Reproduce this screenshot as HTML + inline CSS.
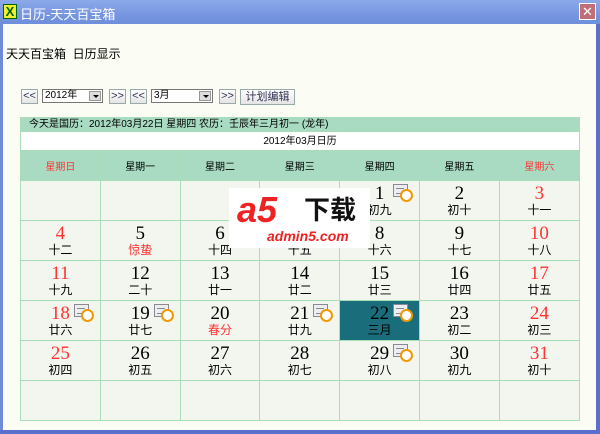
<!DOCTYPE html><html><head><meta charset="utf-8"><style>
*{margin:0;padding:0;box-sizing:border-box}
body{width:600px;height:434px;overflow:hidden;background:#fbfcf4;font-family:"Liberation Sans","Noto Sans CJK SC",sans-serif;font-size:12px;position:relative}
.tb{position:absolute;left:0;top:0;width:600px;height:24px;background:linear-gradient(#8ba9ea,#7796e0 60%,#6f8fdc);}
.tt{position:absolute;left:20px;top:4px;color:#fff;font-size:13px}
.lb{position:absolute;left:0;top:24px;width:3px;height:410px;background:#6f8ad8}
.rb{position:absolute;right:0;top:24px;width:4px;height:410px;background:#5b6fcf}
.bb{position:absolute;left:0;bottom:0;width:600px;height:4px;background:#5b6fcf}
.btn{position:absolute;top:92px;height:15px;border:1px solid #9aa;background:linear-gradient(#fff,#e4e4e4);font-size:11px;text-align:center;line-height:13px;color:#335}
.sel{position:absolute;top:89px;height:14px;border:1px solid #777;background:#fff;font-size:10px;line-height:12px;padding-left:2px}
.sel i{position:absolute;right:1px;top:1px;width:12px;height:10px;background:#ddd;border:1px solid #999}
.sel i:after{content:"";position:absolute;left:3px;top:3px;border:3px solid transparent;border-top:3px solid #000}
table{position:absolute;left:20px;top:117px;border-collapse:collapse;width:560px;table-layout:fixed}
td{border:1px solid #a9dcb9;width:80px;height:40px;background:#f2f6ee;text-align:center;vertical-align:top;position:relative}
.h td{height:30px;background:#a9dbc3;vertical-align:middle;font-size:10px}
.n{font-family:"Liberation Serif",serif;font-size:19px;line-height:19px;margin-top:3px;display:block}
.l{font-size:12px;line-height:14px;display:block}
.r{color:#f33}
.ic{position:absolute;right:11px;top:3px;width:15px;height:13px;border:1px solid #889;background:#eee}
.ic:before{content:"";position:absolute;left:2px;top:3px;width:8px;height:4px;border-top:1px solid #889;border-bottom:1px solid #889}
.ic:after{content:"";position:absolute;right:-6px;bottom:-6px;width:9px;height:9px;border:2px solid #e90;border-radius:50%;background:#fff}
.sel22{background:#1a6e7c!important}
</style></head><body>
<div class="tb"><div style="position:absolute;left:3px;top:4px;width:14px;height:15px;background:#ee3;border:1px solid #060;font-weight:bold;color:#060;font-size:13px;line-height:13px;text-align:center">X</div><div class="tt">日历-天天百宝箱</div>
<div style="position:absolute;right:4px;top:3px;width:17px;height:17px;background:#c06f78;border:1px solid #fff;color:#fff;text-align:center;line-height:15px;font-size:13px">✕</div></div>
<div class="lb"></div><div class="rb"></div><div class="bb"></div>
<div style="position:absolute;left:6px;top:45px;font-size:12px">天天百宝箱&nbsp; 日历显示</div>
<div class="btn" style="left:21px;width:17px;top:89px">&lt;&lt;</div>
<div class="sel" style="left:42px;width:61px">2012年<i></i></div>
<div class="btn" style="left:109px;width:17px;top:89px">&gt;&gt;</div>
<div class="btn" style="left:130px;width:17px;top:89px">&lt;&lt;</div>
<div class="sel" style="left:151px;width:62px">3月<i></i></div>
<div class="btn" style="left:219px;width:17px;top:89px">&gt;&gt;</div>
<div class="btn" style="left:240px;width:55px;top:89px;height:16px;line-height:14px">计划编辑</div>
<table>
<tr><td colspan="7" style="height:14px;background:#a9dbc3;font-size:10px;text-align:left;padding-left:8px;line-height:12px;vertical-align:middle">今天是国历：2012年03月22日 星期四 农历：壬辰年三月初一 (龙年)</td></tr>
<tr><td colspan="7" style="height:19px;background:#fff;font-size:10px;line-height:17px;vertical-align:middle">2012年03月日历</td></tr>
<tr class="h"><td class="r">星期日</td><td>星期一</td><td>星期二</td><td>星期三</td><td>星期四</td><td>星期五</td><td class="r">星期六</td></tr>
<tr><td></td><td></td><td></td><td></td><td><span class="n">1</span><span class="l">初九</span><div class="ic"></div></td><td><span class="n">2</span><span class="l">初十</span></td><td><span class="n r">3</span><span class="l">十一</span></td></tr>
<tr><td><span class="n r">4</span><span class="l">十二</span></td><td><span class="n">5</span><span class="l r">惊蛰</span></td><td><span class="n">6</span><span class="l">十四</span></td><td><span class="n">7</span><span class="l">十五</span></td><td><span class="n">8</span><span class="l">十六</span></td><td><span class="n">9</span><span class="l">十七</span></td><td><span class="n r">10</span><span class="l">十八</span></td></tr>
<tr><td><span class="n r">11</span><span class="l">十九</span></td><td><span class="n">12</span><span class="l">二十</span></td><td><span class="n">13</span><span class="l">廿一</span></td><td><span class="n">14</span><span class="l">廿二</span></td><td><span class="n">15</span><span class="l">廿三</span></td><td><span class="n">16</span><span class="l">廿四</span></td><td><span class="n r">17</span><span class="l">廿五</span></td></tr>
<tr><td><span class="n r">18</span><span class="l">廿六</span><div class="ic"></div></td><td><span class="n">19</span><span class="l">廿七</span><div class="ic"></div></td><td><span class="n">20</span><span class="l r">春分</span></td><td><span class="n">21</span><span class="l">廿九</span><div class="ic"></div></td><td class="sel22"><span class="n">22</span><span class="l">三月</span><div class="ic"></div></td><td><span class="n">23</span><span class="l">初二</span></td><td><span class="n r">24</span><span class="l">初三</span></td></tr>
<tr><td><span class="n r">25</span><span class="l">初四</span></td><td><span class="n">26</span><span class="l">初五</span></td><td><span class="n">27</span><span class="l">初六</span></td><td><span class="n">28</span><span class="l">初七</span></td><td><span class="n">29</span><span class="l">初八</span><div class="ic"></div></td><td><span class="n">30</span><span class="l">初九</span></td><td><span class="n r">31</span><span class="l">初十</span></td></tr>
<tr><td></td><td></td><td></td><td></td><td></td><td></td><td></td></tr>
</table>
<div style="position:absolute;left:229px;top:188px;width:141px;height:60px;background:#fff">
<div style="position:absolute;left:8px;top:2px;font:italic bold 36px 'Liberation Sans',sans-serif;color:#e22;line-height:40px">a5</div>
<div style="position:absolute;left:75px;top:6px;font:bold 26px 'Noto Sans CJK SC',sans-serif;color:#111;line-height:30px">下载</div>
<div style="position:absolute;left:38px;top:40px;font:bold italic 14px 'Liberation Sans',sans-serif;color:#e22;line-height:16px">admin5.com</div>
</div>
</body></html>
